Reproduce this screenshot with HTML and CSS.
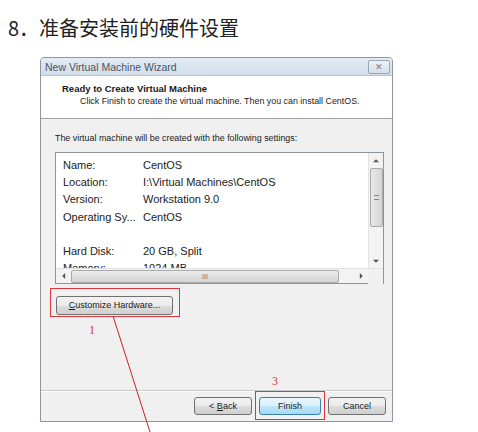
FILE: index.html
```html
<!DOCTYPE html>
<html>
<head>
<meta charset="utf-8">
<link rel="stylesheet" href="styles.css">
</head>
<body>
<div class="page">
  <h1 class="heading"><span class="num">8．</span>准备安装前的硬件设置</h1>
  <div class="window">
    <div class="titlebar">
      <span class="title">New Virtual Machine Wizard</span>
      <span class="close">✕</span>
    </div>
    <div class="header">
      <div class="h-title">Ready to Create Virtual Machine</div>
      <div class="h-sub">Click Finish to create the virtual machine. Then you can install CentOS.</div>
    </div>
    <div class="content">
      <div class="intro">The virtual machine will be created with the following settings:</div>
      <div class="listbox">
        <div class="list-main">
          <div class="rows">
            <div class="row"><span class="k">Name:</span><span class="v">CentOS</span></div>
            <div class="row"><span class="k">Location:</span><span class="v">I:\Virtual Machines\CentOS</span></div>
            <div class="row"><span class="k">Version:</span><span class="v">Workstation 9.0</span></div>
            <div class="row"><span class="k">Operating Sy...</span><span class="v">CentOS</span></div>
            <div class="row"></div>
            <div class="row"><span class="k">Hard Disk:</span><span class="v">20 GB, Split</span></div>
            <div class="row"><span class="k">Memory:</span><span class="v">1024 MB</span></div>
          </div>
          <div class="vscroll">
            <span class="arr up"></span>
            <span class="vthumb"><span class="grip"></span></span>
            <span class="arr down"></span>
          </div>
        </div>
        <div class="hscroll">
          <span class="arr left"></span>
          <span class="hthumb"><span class="hgrip">III</span></span>
          <span class="arr right"></span>
          <span class="corner"></span>
        </div>
      </div>
      <div class="custom-row">
        <button class="btn custom"><u>C</u>ustomize Hardware...</button>
      </div>
    </div>
    <div class="footer">
      <button class="btn">&lt; <u>B</u>ack</button>
      <button class="btn finish">Finish</button>
      <button class="btn">Cancel</button>
    </div>
  </div>

  <div class="mark box1"></div>
  <div class="mark box3"></div>
  <span class="note n1">1</span>
  <span class="note n3">3</span>
  <svg class="arrow" width="478" height="432" viewBox="0 0 478 432"><line x1="113" y1="316" x2="150" y2="432" stroke="#c8202a" stroke-width="1"/></svg>
</div>
</body>
</html>
```

FILE: styles.css
```css
* { box-sizing: border-box; }
html, body { margin: 0; padding: 0; background: #fff; }
.page { position: relative; width: 478px; height: 432px; overflow: hidden; }

.heading {
  margin: 0;
  padding: 14px 0 0 8px;
  height: 57px;
  font-family: "Noto Sans CJK SC", sans-serif;
  font-weight: normal;
  font-size: 20px;
  line-height: 28px;
  color: #222;
}
.num { font-family: "Noto Sans CJK SC", sans-serif; }

.window {
  margin-left: 40px;
  width: 353px;
  height: 365px;
  border: 1px solid #8d97a3;
  border-radius: 4px 4px 0 0;
  background: #f0f0f0;
  display: flex;
  flex-direction: column;
  font-family: "Liberation Sans", Arial, sans-serif;
  color: #1a1a1a;
}
.titlebar {
  height: 18px;
  display: flex;
  align-items: center;
  justify-content: space-between;
  padding: 0 2px 0 4px;
  background: linear-gradient(#e3ebf4, #d3deeb);
  border-bottom: 1px solid #b8c3cf;
  border-radius: 3px 3px 0 0;
}
.title { font-size: 10.5px; color: #4a5563; }
.close {
  width: 22px; height: 14px;
  border: 1px solid #9aa6b4;
  border-radius: 2px;
  background: linear-gradient(#eef2f7, #d6dee8);
  font-size: 9px; line-height: 12px;
  text-align: center; color: #6b7888;
}
.header {
  height: 43px;
  background: #fff;
  border-bottom: 1px solid #a0a0a0;
  padding: 6px 0 0 21px;
}
.h-title { font-size: 9.5px; font-weight: bold; line-height: 13px; }
.h-sub { font-size: 8.9px; line-height: 13px; padding-left: 18px; }

.content {
  flex: 1;
  padding: 13px 8px 0 14px;
  border-bottom: 1px solid #c8c8c8;
}
.intro { font-size: 8.9px; line-height: 12px; height: 20px; }
.listbox {
  height: 132px;
  border: 1px solid #8e949c;
  background: #fff;
  display: flex;
  flex-direction: column;
}
.list-main { flex: 1; display: flex; overflow: hidden; }
.rows { flex: 1; padding: 4px 0 0 7px; overflow: hidden; }
.row { display: flex; height: 17.2px; font-size: 11px; line-height: 17px; color: #222; white-space: nowrap; }
.k { width: 80px; }
.vscroll {
  width: 15px;
  background: #f3f3f3;
  border-left: 1px solid #e2e2e2;
  display: flex; flex-direction: column; align-items: center;
}
.arr { position: relative; width: 15px; height: 15px; flex: none; }
.arr::after { content: ""; position: absolute; left: 50%; top: 50%; border: 3px solid transparent; }
.up::after { border-bottom-color: #555; transform: translate(-50%, -80%); }
.down::after { border-top-color: #555; transform: translate(-50%, -20%); }
.left::after { border-right-color: #555; transform: translate(-80%, -50%); }
.right::after { border-left-color: #555; transform: translate(-20%, -50%); }
.vthumb {
  width: 13px; height: 59px;
  border: 1px solid #a9a9a9; border-radius: 2px;
  background: linear-gradient(90deg, #e9e9e9, #d3d3d3);
  display: flex; align-items: center; justify-content: center;
}
.grip { width: 5px; height: 5px; border-top: 1px solid #888; border-bottom: 1px solid #888; }
.vscroll .down { margin-top: auto; }
.hscroll {
  height: 15px; flex: none;
  display: flex; align-items: center;
  background: #f3f3f3;
  border-top: 1px solid #e2e2e2;
}
.hthumb {
  width: 268px; height: 13px;
  border: 1px solid #a9a9a9; border-radius: 2px;
  background: linear-gradient(#ececec, #d3d3d3);
  display: flex; align-items: center; justify-content: center;
}
.hgrip { font-size: 7px; color: #777; letter-spacing: 0; }
.hscroll .right { margin-left: auto; }
.corner { width: 15px; height: 15px; background: #f0f0f0; }

.custom-row { padding: 10px 0 0 1px; }
.btn {
  height: 19px;
  border: 1px solid #707070;
  border-radius: 3px;
  background: linear-gradient(#f2f2f2 0%, #ebebeb 50%, #dddddd 51%, #cfcfcf 100%);
  font-family: "Liberation Sans", Arial, sans-serif;
  font-size: 9px;
  color: #1a1a1a;
  padding: 0;
}
.btn u { text-decoration: underline; }
.custom { width: 117px; }

.footer {
  height: 30px;
  display: flex;
  justify-content: flex-end;
  align-items: center;
  gap: 7px;
  padding: 0 6px 1px 0;
  border-top: 1px solid #fff;
}
.footer .btn { width: 58px; height: 18px; }
.footer .finish {
  width: 62px;
  border-color: #3c7fb1;
  background: linear-gradient(#eaf6fd 0%, #d9f0fc 50%, #bee6fd 51%, #a7d9f5 100%);
}

.mark { position: absolute; border: 1px solid #d9363e; }
.box1 { left: 50px; top: 288px; width: 130px; height: 29px; }
.box3 { left: 255px; top: 391px; width: 70px; height: 29px; }
.note {
  position: absolute;
  font-family: "Liberation Serif", serif;
  font-size: 12px; line-height: 12px;
  color: #d9363e;
}
.n1 { left: 89px; top: 324px; }
.n3 { left: 272px; top: 375px; }
.arrow { position: absolute; left: 0; top: 0; pointer-events: none; }
```
